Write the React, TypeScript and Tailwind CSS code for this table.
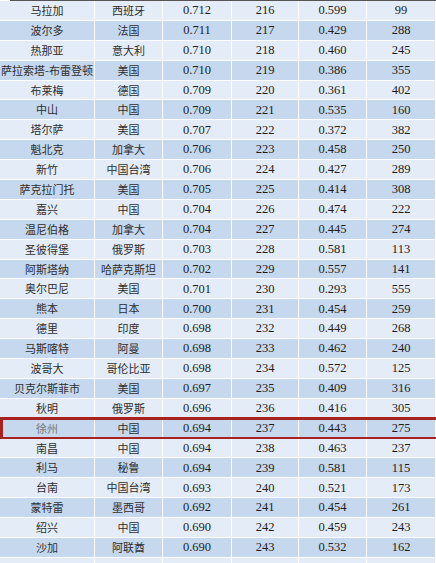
import React from 'react';

type Row = [string, string, string, string, string, string];

const rows: Row[] = [
  ['马拉加', '西班牙', '0.712', '216', '0.599', '99'],
  ['波尔多', '法国', '0.711', '217', '0.429', '288'],
  ['热那亚', '意大利', '0.710', '218', '0.460', '245'],
  ['萨拉索塔-布雷登顿', '美国', '0.710', '219', '0.386', '355'],
  ['布莱梅', '德国', '0.709', '220', '0.361', '402'],
  ['中山', '中国', '0.709', '221', '0.535', '160'],
  ['塔尔萨', '美国', '0.707', '222', '0.372', '382'],
  ['魁北克', '加拿大', '0.706', '223', '0.458', '250'],
  ['新竹', '中国台湾', '0.706', '224', '0.427', '289'],
  ['萨克拉门托', '美国', '0.705', '225', '0.414', '308'],
  ['嘉兴', '中国', '0.704', '226', '0.474', '222'],
  ['温尼伯格', '加拿大', '0.704', '227', '0.445', '274'],
  ['圣彼得堡', '俄罗斯', '0.703', '228', '0.581', '113'],
  ['阿斯塔纳', '哈萨克斯坦', '0.702', '229', '0.557', '141'],
  ['奥尔巴尼', '美国', '0.701', '230', '0.293', '555'],
  ['熊本', '日本', '0.700', '231', '0.454', '259'],
  ['德里', '印度', '0.698', '232', '0.449', '268'],
  ['马斯喀特', '阿曼', '0.698', '233', '0.462', '240'],
  ['波哥大', '哥伦比亚', '0.698', '234', '0.572', '125'],
  ['贝克尔斯菲市', '美国', '0.697', '235', '0.409', '316'],
  ['秋明', '俄罗斯', '0.696', '236', '0.416', '305'],
  ['徐州', '中国', '0.694', '237', '0.443', '275'],
  ['南昌', '中国', '0.694', '238', '0.463', '237'],
  ['利马', '秘鲁', '0.694', '239', '0.581', '115'],
  ['台南', '中国台湾', '0.693', '240', '0.521', '173'],
  ['蒙特雷', '墨西哥', '0.692', '241', '0.454', '261'],
  ['绍兴', '中国', '0.690', '242', '0.459', '243'],
  ['沙加', '阿联酋', '0.690', '243', '0.532', '162'],
];

const cjk = "font-['Noto_Sans_CJK_SC',sans-serif] text-[11px] text-[#2e2e2e]";
const num = "font-['Liberation_Serif',serif] text-[12.5px] text-[#1e1e1e]";

const App = () => {
  return (
    <div className="w-[436px] h-[563px] overflow-hidden bg-white">
      <div className="ml-[10px] h-px bg-[#555]" />
      {rows.map((r, i) => {
        const dark = i % 2 === 1;
        const highlight = r[0] === '徐州';
        const bg = dark ? 'bg-[#c5d8ee]' : 'bg-[#e3ecf7]';
        return (
          <div
            key={r[3]}
            className="relative grid h-[19.9px] grid-cols-[95px_68px_69px_67px_68px_69px] border-b border-white"
          >
            {r.map((c, j) => (
              <div
                key={j}
                className={`flex items-center justify-center whitespace-nowrap border-r border-white leading-none ${bg} ${
                  j < 2 ? cjk : num
                } ${highlight && j === 0 ? 'text-[#777]' : ''}`}
              >
                {c}
              </div>
            ))}
            {highlight && (
              <div className="pointer-events-none absolute -top-[2px] -bottom-[2px] left-0 -right-[4px] border-[3px] border-[#a8231f]" />
            )}
          </div>
        );
      })}
      <div className="grid h-[6px] grid-cols-[95px_68px_69px_67px_68px_69px]">
        {[0, 1, 2, 3, 4, 5].map((j) => (
          <div key={j} className="border-r border-white bg-[#e3ecf7]" />
        ))}
      </div>
    </div>
  );
};

export default App;
